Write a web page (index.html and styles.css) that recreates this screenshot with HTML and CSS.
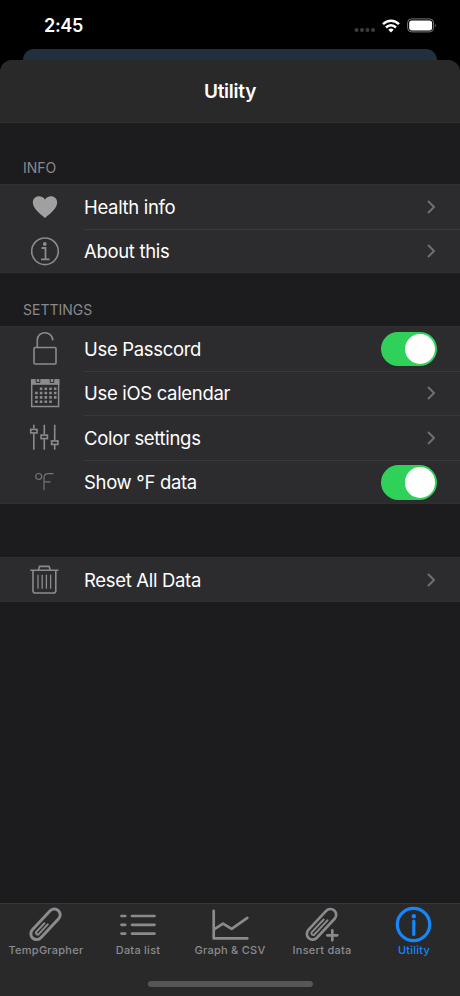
FILE: index.html
```html
<!DOCTYPE html>
<html lang="en">
<head>
<meta charset="utf-8">
<title>Utility</title>
<link rel="stylesheet" href="styles.css">
</head>
<body>
<div class="phone">
  <header class="status">
    <span class="time">2:45</span>
    <div class="signals">
      <svg class="dots" width="22" height="6" viewBox="0 0 22 6" fill="#3c3c3e"><circle cx="2.5" cy="3" r="2"/><circle cx="8" cy="3" r="2"/><circle cx="13.5" cy="3" r="2"/><circle cx="19" cy="3" r="2"/></svg>
      <svg class="wifi" width="18" height="14" viewBox="0 0 18 14" fill="none" stroke="#fff" stroke-width="2.5"><path d="M1 5.2C5.5.6 12.500.6 17 5.200"/><path d="M4 8.500c2.900-2.900 7.100-2.900 10 0"/><path d="M6.300 10.700C7.900 9.200 10.100 9.200 11.700 10.700L9 13.500Z" fill="#fff" stroke="none"/></svg>
      <svg class="battery" width="30" height="15" viewBox="0 0 30 15"><rect x=".6" y=".9" width="26" height="13" rx="4" fill="none" stroke="#77777a"/><rect x="2.200" y="2.400" width="22.900" height="10" rx="2.600" fill="#fff"/><path d="M28 5.500q1.600 1.900 0 3.900z" fill="#77777a"/></svg>
    </div>
  </header>
  <div class="behind"></div>
  <main class="sheet">
    <h1 class="title"><span>Utility</span></h1>
    <div class="content">
      <h2 class="label label-info"><span>INFO</span></h2>
      <section class="group">
        <div class="row">
          <svg class="icon" viewBox="0 0 32 36" fill="#a0a0a1"><path d="M16 30C12 26.400 3.800 20.700 3.800 14.500C3.800 7.900 12 5.900 16 11.400C20 5.900 28.200 7.900 28.200 14.500C28.200 20.700 20 26.400 16 30Z"/></svg>
          <div class="cell"><span class="text">Health info</span><svg class="chev" viewBox="0 0 8 14"><path d="M1 1l6 6-6 6"/></svg></div>
        </div>
        <div class="row">
          <svg class="icon line" viewBox="0 0 32 36"><circle cx="16" cy="18.300" r="13.300"/><path d="M12.500 15h4v11.200M12 26.300h8.500" stroke-width="1.800"/><circle cx="15.800" cy="11" r="1.900" fill="#8b8b8d" stroke="none"/></svg>
          <div class="cell"><span class="text">About this</span><svg class="chev" viewBox="0 0 8 14"><path d="M1 1l6 6-6 6"/></svg></div>
        </div>
      </section>
      <h2 class="label label-settings"><span>SETTINGS</span></h2>
      <section class="group">
        <div class="row">
          <svg class="icon line" viewBox="0 0 32 36"><rect x="5" y="17.500" width="22" height="16.500" rx="1"/><path d="M8.300 17.500V10.100C8.300.3 23.200.3 23.900 10.400"/></svg>
          <div class="cell"><span class="text">Use Passcord</span><span class="switch"></span></div>
        </div>
        <div class="row">
          <svg class="icon line" viewBox="0 0 32 36"><rect x="2.700" y="5" width="26.900" height="26.500" stroke-width="1.500"/><path d="M2 4.300h28.300v5.500H2z" fill="#8b8b8d" stroke="none"/><path d="M7.200 3.500v4h3.600v-4M21.200 3.500v4h3.600v-4" stroke="#2c2c2e" stroke-width="1"/><g stroke-width="2.600" stroke-dasharray="2.600 2.100"><path d="M10.800 13.700h16.800M6.100 18h21.400M6.100 22.400h21.400M6.100 26.800h16.800"/></g></svg>
          <div class="cell"><span class="text">Use iOS calendar</span><svg class="chev" viewBox="0 0 8 14"><path d="M1 1l6 6-6 6"/></svg></div>
        </div>
        <div class="row">
          <svg class="icon line" viewBox="0 0 32 36"><path d="M4.800 5.700v3.900M4.800 14.400v16.400M15.300 5.700V15.400M15.300 19.900v10.900M25.700 5.700v15.800M25.700 25.900v4.900"/><rect x="1.700" y="10.400" width="6.300" height="3.500"/><rect x="12.100" y="16.100" width="6.300" height="3.500"/><rect x="22.600" y="21.900" width="6.300" height="3.500"/></svg>
          <div class="cell"><span class="text">Color settings</span><svg class="chev" viewBox="0 0 8 14"><path d="M1 1l6 6-6 6"/></svg></div>
        </div>
        <div class="row">
          <svg class="icon line thin" viewBox="0 0 32 36"><circle cx="9.700" cy="12.500" r="3"/><path d="M15 26.200V14Q15 9.700 19.200 9.700H24.500M15 17.800h6.500"/></svg>
          <div class="cell"><span class="text">Show °F data</span><span class="switch"></span></div>
        </div>
      </section>
      <section class="group reset">
        <div class="row">
          <svg class="icon line" viewBox="0 0 32 36"><path d="M1.300 9.200h28.200M9.500 9l1-3.600h9.500l1.200 3.600M4 9.200v20.500q0 2.300 2.300 2.300h18.200q2.300 0 2.300-2.300V9.200"/><path d="M9 13.700v14M13.200 13.700v14M17.400 13.700v14M21.600 13.700v14" stroke-width="1.300"/></svg>
          <div class="cell"><span class="text">Reset All Data</span><svg class="chev" viewBox="0 0 8 14"><path d="M1 1l6 6-6 6"/></svg></div>
        </div>
      </section>
    </div>
    <nav class="tabs">
      <div class="tab"><svg viewBox="0 0 38 36"><g transform="translate(18.500 17.300) rotate(43)"><rect x="-5.800" y="-18.800" width="11.600" height="37.600" rx="5.800" stroke-width="3"/><path d="M-1.500 12.500V0M1.700 12.500V-1.500M-1.500 12.500Q0 14 1.700 12.500" stroke-width="2"/></g></svg><span>TempGrapher</span></div>
      <div class="tab"><svg viewBox="0 0 38 36" stroke-width="3.200"><path d="M2.500 9h3.700M2.500 17.800h3.700M2.500 26.600h3.700M13 9h22.500M13 17.800h22.500M13 26.600h22.500"/></svg><span>Data list</span></div>
      <div class="tab"><svg viewBox="0 0 38 36"><path d="M2.700 3.800v27.600h33.600M3.500 22.100l8.500-5.500 8.700 5.300L36.300 10.900"/></svg><span>Graph &amp; CSV</span></div>
      <div class="tab"><svg viewBox="0 0 38 36"><g transform="translate(18.500 17.300) rotate(43)"><rect x="-5.800" y="-18.800" width="11.600" height="37.600" rx="5.800" stroke-width="2.700"/><path d="M-1.700 13V-5M1.700 13V-7M-1.700 13Q0 15 1.700 13" stroke-width="2"/></g><path d="M29.300 23.500v9.500M24.500 28.300h9.500" stroke="#29292a" stroke-width="6"/><path d="M29.300 23.300v10M24.300 28.300h10"/></svg><span>Insert data</span></div>
      <div class="tab active"><svg viewBox="0 0 38 36"><circle cx="18.500" cy="17.500" r="16.200" stroke-width="3.200"/><path d="M18.800 14v13.500" stroke-width="3.200"/><circle cx="18.800" cy="9.200" r="2.200" fill="#1686fb" stroke="none"/></svg><span>Utility</span></div>
    </nav>
    <div class="home"></div>
  </main>
</div>
</body>
</html>
```
FILE: styles.css
```css
* { box-sizing: border-box; }
body { margin: 0; background: #000; color: #fff; font-family: Inter, "Liberation Sans", sans-serif; }
.phone { width: 460px; height: 996px; display: flex; flex-direction: column; overflow: hidden; }
.status { height: 49px; flex: none; display: flex; align-items: flex-start; justify-content: space-between; padding: 14px 23px 0 44px; }
.time { font-size: 18px; line-height: 24px; font-weight: 600; letter-spacing: -0.300px; }
.signals { display: flex; align-items: center; height: 23px; }
.dots { margin: 9px 6px 0 0; }
.wifi { margin-right: 7px; }
.behind { height: 24px; flex: none; margin: 0 23px -13px; background: #20303f; border-radius: 11px 11px 0 0; }
.sheet { flex: 1; min-height: 0; display: flex; flex-direction: column; background: #1c1c1e; border-radius: 12px 12px 0 0; overflow: hidden; }
.title { margin: 0; height: 63px; flex: none; display: flex; align-items: center; justify-content: center; padding-top: 2px; background: #29292a; border-bottom: 1px solid #303032; font-size: 19px; font-weight: 600; line-height: 24px; letter-spacing: -0.250px; }
.content { flex: 1; min-height: 0; }
.label { margin: 0; padding-left: 23px; font-size: 14px; font-weight: 400; line-height: 18px; color: #89898d; }
.label-info { height: 61px; padding-top: 36px; }
.label-settings { height: 53px; padding-top: 28px; }
.group { background: #2c2c2e; box-shadow: inset 0 1px #303032, inset 0 -1px #303032; }
.reset { margin-top: 53px; }
.row { height: 44.500px; display: flex; align-items: center; padding-left: 29px; }
.icon { width: 32px; height: 36px; margin-right: 23px; flex: none; }
.line { fill: none; stroke: #8b8b8d; stroke-width: 1.600; }
.thin { stroke: #747476; stroke-width: 1.200; }
.cell { flex: 1; align-self: stretch; display: flex; align-items: center; justify-content: space-between; padding: 1px 23px 0 0; }
.row + .row .cell { box-shadow: inset 0 1px #39393b; }
.text { font-size: 18.500px; line-height: 24px; letter-spacing: -0.320px; }
.chev { width: 8px; height: 14px; margin-right: 2px; fill: none; stroke: #6e6e71; stroke-width: 2; }
.switch { width: 56.500px; height: 34.500px; border-radius: 18px; background: #30d158; display: flex; justify-content: flex-end; padding: 2px; }
.switch::before { content: ""; width: 30.500px; height: 30.500px; border-radius: 50%; background: #fff; }
.tabs { height: 77px; flex: none; display: flex; background: #29292a; border-top: 1px solid #38383a; }
.tab { width: 92px; display: flex; flex-direction: column; align-items: center; padding-top: 3px; color: #8b8b8d; font-size: 11px; line-height: 14px; font-weight: 500; letter-spacing: 0.250px; }
.tab svg { width: 38px; height: 36px; fill: none; stroke: #8b8b8d; stroke-width: 2.700; stroke-linecap: round; stroke-linejoin: round; overflow: visible; }
.tab span { white-space: nowrap; }
.active { color: #1686fb; }
.tab.active svg { stroke: #1686fb; }
.home { height: 16px; flex: none; background: #29292a; display: flex; justify-content: center; padding-top: 1px; }
.home::before { content: ""; width: 165px; height: 6px; border-radius: 3px; background: #565658; }
```
